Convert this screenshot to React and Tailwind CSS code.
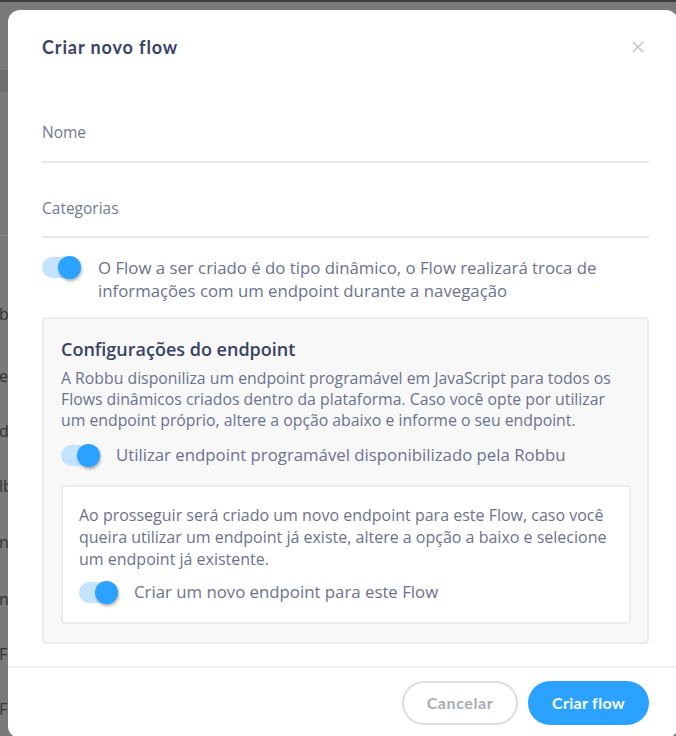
import React from "react";

function Toggle() {
  return (
    <div className="relative h-[21px] w-[39px] shrink-0">
      <div className="absolute inset-0 rounded-full bg-[#c3e3ff]" />
      <div className="absolute right-0 top-[-1px] h-[23px] w-[23px] rounded-full bg-[#2ba2ff] shadow-[1px_2px_3px_rgba(0,0,0,0.3)]" />
    </div>
  );
}

const bgRows = [
  { t: "b", c: "mt-[0px]" },
  { t: "e", c: "mt-[42px]" },
  { t: "dl", c: "mt-[35px]" },
  { t: "lb", c: "mt-[35px]" },
  { t: "n", c: "mt-[36px]" },
  { t: "n", c: "mt-[37px]" },
  { t: "Fl", c: "mt-[35px]" },
  { t: "Fl", c: "mt-[35px]" },
];

export default function App() {
  const sans = { fontFamily: '"Open Sans", "Noto Sans", sans-serif' };
  const head = { fontFamily: 'Lato, "Open Sans", sans-serif' };
  return (
    <div className="relative h-[736px] w-[676px] overflow-hidden bg-[#7a7a7a]" style={sans}>
      {/* underlying page */}
      <div className="flex flex-col">
        <div className="h-[2px] bg-[#3c3c3c]" />
        <div className="mt-[68px] h-[22px] bg-[#6f6f71]" />
        <div className="mt-[143px] h-px bg-[#8a8a8a]" />
        <div className="flex flex-col pt-[68px] text-[16px] leading-[20px] text-[#333]">
          {bgRows.map((r, i) => (
            <div key={i} className={"-ml-[1px] " + r.c}>{r.t}</div>
          ))}
        </div>
      </div>

      {/* modal */}
      <div className="absolute left-2 top-2.5 flex h-[728px] w-[670px] flex-col rounded-[12px] bg-white">
        <div className="flex items-center justify-between pl-[34px] pr-[32px] pt-[26px]">
          <h2 className="text-[18px] font-bold leading-[22px] tracking-[0.9px] text-[#384265]" style={head}>
            Criar novo flow
          </h2>
          <svg width="12" height="12" viewBox="0 0 12 12" className="mr-[2px] -mt-[1px]">
            <path d="M1 1L11 11M11 1L1 11" stroke="#c3c6d2" strokeWidth="1.6" />
          </svg>
        </div>

        <div className="flex flex-col pl-[34px] pr-[29px]">
          <div className="mt-[64px] text-[15.5px] leading-[20px] text-[#737a94]">Nome</div>
          <div className="mt-[19px] h-[2px] bg-[#e8e9ef]" />
          <div className="mt-[35px] text-[15.5px] leading-[20px] text-[#737a94]">Categorias</div>
          <div className="mt-[18px] h-[2px] bg-[#e8e9ef]" />

          <div className="mt-[18px] flex items-start gap-[17px]">
            <div className="mt-[1px]"><Toggle /></div>
            <p className="text-[16.8px] leading-[23px] text-[#6b7290]">
              O Flow a ser criado é do tipo dinâmico, o Flow realizará troca de informações com um endpoint durante a navegação
            </p>
          </div>

          <div className="mt-[15px] rounded-[4px] border-2 border-[#ebecf0] bg-[#f8f8f9] pb-[18px] pl-[17px] pr-[14px] pt-[18px]">
            <h3 className="text-[18px] font-semibold leading-[24px] text-[#384265]">Configurações do endpoint</h3>
            <p className="mt-[7px] text-[15.8px] leading-[21px] text-[#6b7290]">
              A Robbu disponiliza um endpoint programável em JavaScript para todos os Flows dinâmicos criados dentro da plataforma. Caso você opte por utilizar um endpoint próprio, altere a opção abaixo e informe o seu endpoint.
            </p>
            <div className="mt-[13px] flex items-center gap-[16px]">
              <Toggle />
              <span className="text-[16.8px] leading-[22px] text-[#6b7290]">Utilizar endpoint programável disponibilizado pela Robbu</span>
            </div>
            <div className="mr-[2px] mt-[19px] rounded-[4px] border-2 border-[#ebecf0] bg-white pb-[19px] pl-[16px] pr-[12px] pt-[17px]">
              <p className="text-[16px] leading-[22px] text-[#6b7290]">
                Ao prosseguir será criado um novo endpoint para este Flow, caso você queira utilizar um endpoint já existe, altere a opção a baixo e selecione um endpoint já existente.
              </p>
              <div className="mt-[11px] flex items-center gap-[16px]">
                <Toggle />
                <span className="text-[16.8px] leading-[22px] text-[#6b7290]">Criar um novo endpoint para este Flow</span>
              </div>
            </div>
          </div>
        </div>

        <div className="mt-[22px] h-[2px] bg-[#eeeef2]" />
        <div className="flex justify-end gap-[10px] pr-[29px] pt-[13px]" style={head}>
          <button className="h-[44px] w-[116px] rounded-full border-2 border-[#dcdde4] text-[16px] font-bold tracking-[0.6px] text-[#a8aaba]">
            Cancelar
          </button>
          <button className="h-[44px] w-[121px] rounded-full bg-[#2ba2ff] text-[16px] font-bold tracking-[0.3px] text-white">
            Criar flow
          </button>
        </div>
      </div>
    </div>
  );
}
